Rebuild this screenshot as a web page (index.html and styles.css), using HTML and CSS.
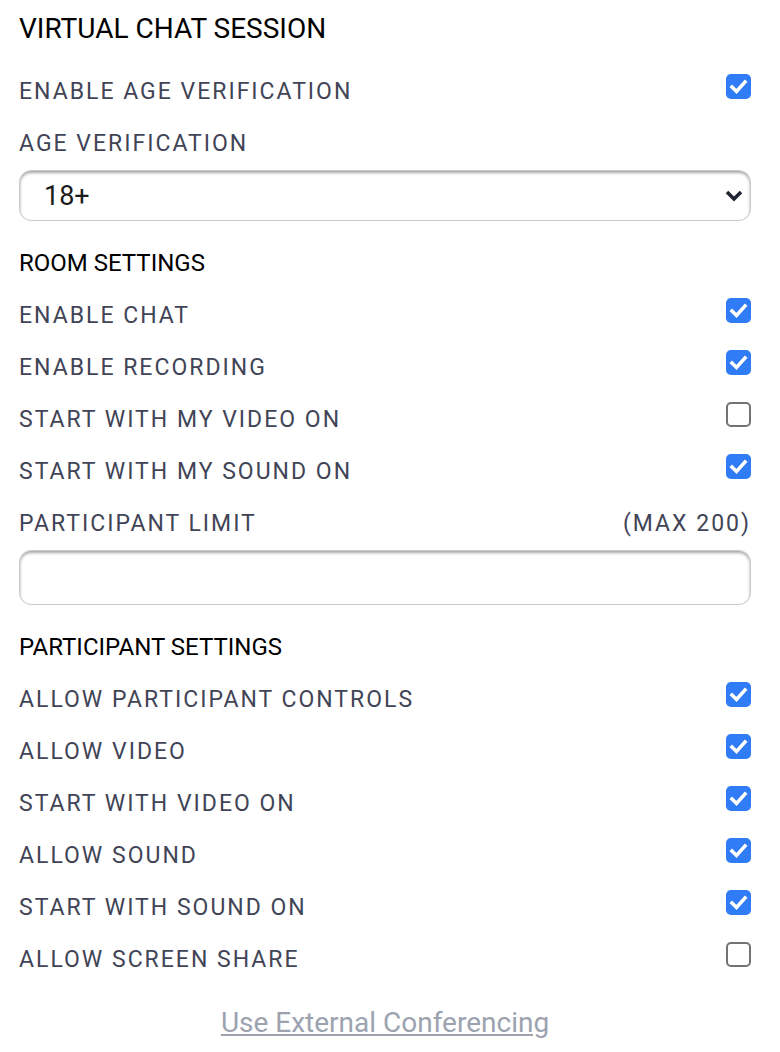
FILE: index.html
```html
<!DOCTYPE html>
<html>
<head>
<meta charset="utf-8">
<link rel="stylesheet" href="styles.css">
</head>
<body>
<div class="panel">
  <h1 class="title">VIRTUAL CHAT SESSION</h1>

  <div class="row">
    <span class="label">ENABLE AGE VERIFICATION</span>
    <span class="check on"><svg viewBox="0 0 25 25"><path d="M6 13 L10.5 17.5 L19 8" /></svg></span>
  </div>
  <div class="row">
    <span class="label">AGE VERIFICATION</span>
  </div>
  <div class="select">
    <span class="select-value">18+</span>
    <svg class="chev" viewBox="0 0 20 14"><path d="M3 3 L10 10 L17 3" /></svg>
  </div>

  <h2 class="section">ROOM SETTINGS</h2>
  <div class="row">
    <span class="label">ENABLE CHAT</span>
    <span class="check on"><svg viewBox="0 0 25 25"><path d="M6 13 L10.5 17.5 L19 8" /></svg></span>
  </div>
  <div class="row">
    <span class="label">ENABLE RECORDING</span>
    <span class="check on"><svg viewBox="0 0 25 25"><path d="M6 13 L10.5 17.5 L19 8" /></svg></span>
  </div>
  <div class="row">
    <span class="label">START WITH MY VIDEO ON</span>
    <span class="check"></span>
  </div>
  <div class="row">
    <span class="label">START WITH MY SOUND ON</span>
    <span class="check on"><svg viewBox="0 0 25 25"><path d="M6 13 L10.5 17.5 L19 8" /></svg></span>
  </div>
  <div class="row">
    <span class="label">PARTICIPANT LIMIT</span>
    <span class="label">(MAX 200)</span>
  </div>
  <div class="input"></div>

  <h2 class="section">PARTICIPANT SETTINGS</h2>
  <div class="row">
    <span class="label">ALLOW PARTICIPANT CONTROLS</span>
    <span class="check on"><svg viewBox="0 0 25 25"><path d="M6 13 L10.5 17.5 L19 8" /></svg></span>
  </div>
  <div class="row">
    <span class="label">ALLOW VIDEO</span>
    <span class="check on"><svg viewBox="0 0 25 25"><path d="M6 13 L10.5 17.5 L19 8" /></svg></span>
  </div>
  <div class="row">
    <span class="label">START WITH VIDEO ON</span>
    <span class="check on"><svg viewBox="0 0 25 25"><path d="M6 13 L10.5 17.5 L19 8" /></svg></span>
  </div>
  <div class="row">
    <span class="label">ALLOW SOUND</span>
    <span class="check on"><svg viewBox="0 0 25 25"><path d="M6 13 L10.5 17.5 L19 8" /></svg></span>
  </div>
  <div class="row">
    <span class="label">START WITH SOUND ON</span>
    <span class="check on"><svg viewBox="0 0 25 25"><path d="M6 13 L10.5 17.5 L19 8" /></svg></span>
  </div>
  <div class="row">
    <span class="label">ALLOW SCREEN SHARE</span>
    <span class="check"></span>
  </div>

  <div class="footer"><a class="link" href="#">Use External Conferencing</a></div>
</div>
</body>
</html>
```

FILE: styles.css
```css
html, body {
  margin: 0;
  padding: 0;
  background: #ffffff;
}

body {
  font-family: Roboto, "Liberation Sans", sans-serif;
}

.panel {
  width: 732px;
  padding: 2px 0 0 19px;
  display: flex;
  flex-direction: column;
}

.title {
  margin: 0 0 11px 0;
  height: 52px;
  display: flex;
  align-items: center;
  font-size: 28px;
  font-weight: 400;
  color: #000000;
}

.section {
  margin: 16px 0 0 0;
  height: 52px;
  display: flex;
  align-items: center;
  font-size: 24px;
  font-weight: 400;
  color: #000000;
}

.row {
  height: 52px;
  display: flex;
  align-items: center;
  justify-content: space-between;
}

.label {
  font-size: 23px;
  letter-spacing: 2px;
  color: #414456;
}

.check {
  width: 25px;
  height: 25px;
  box-sizing: border-box;
  border: 2px solid #737373;
  border-radius: 5px;
  margin-bottom: 9px;
  display: flex;
  align-items: center;
  justify-content: center;
}

.check.on {
  border: none;
  background: #2f7cf6;
}

.check svg {
  width: 25px;
  height: 25px;
  fill: none;
  stroke: #ffffff;
  stroke-width: 3.6;
  stroke-linecap: square;
  stroke-linejoin: miter;
}

.select {
  margin-top: 1px;
  height: 51px;
  box-sizing: border-box;
  border: 1px solid #c9c9c9;
  border-radius: 12px;
  box-shadow: inset 0 2px 3px rgba(0, 0, 0, 0.35);
  display: flex;
  align-items: center;
  justify-content: space-between;
  padding: 0 6px 0 24px;
}

.select-value {
  font-size: 27px;
  color: #1b1b1b;
}

.chev {
  width: 20px;
  height: 14px;
  fill: none;
  stroke: #1f2433;
  stroke-width: 3.5;
}

.input {
  margin-top: 1px;
  height: 55px;
  box-sizing: border-box;
  border: 1px solid #c9c9c9;
  border-radius: 12px;
  box-shadow: inset 0 2px 3px rgba(0, 0, 0, 0.35);
}

.footer {
  margin-top: 11px;
  height: 52px;
  display: flex;
  align-items: center;
  justify-content: center;
}

.link {
  font-size: 28px;
  color: #9ca3af;
  text-decoration: underline;
}
```
